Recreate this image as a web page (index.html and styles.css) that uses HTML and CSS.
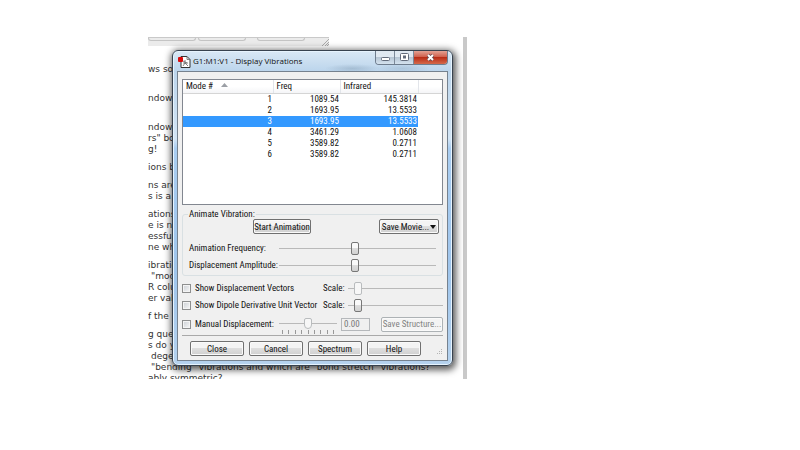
FILE: index.html
```html
<!DOCTYPE html>
<html lang="en">
<head>
<meta charset="utf-8">
<title>Display Vibrations</title>
<link rel="stylesheet" href="styles.css">
</head>
<body>
<main class="desktop">
  <div class="document">
    <div class="toolbar"><i></i><i></i><i class="apart"></i>
      <svg class="corner" width="8" height="8" viewBox="0 0 8 8"><path d="M1 8L8 1M4 8L8 4M6 8L8 6" stroke="#aaa" fill="none"/></svg>
    </div>
    <div class="notes">
      <p>ws so<br>&nbsp;</p>
      <p>ndow<br>&nbsp;</p>
      <p>ndow<br>rs" bo<br>g!</p>
      <p>ions b</p>
      <p>ns are<br>s is a</p>
      <p>ations<br>e is n<br>essful<br>ne wh</p>
      <p>ibratio<br><span class="indent">"mod</span><br>R colu<br>er val</p>
      <p>f the "</p>
      <p>g ques<br>s do yo<br><span class="indent">degen</span><br><span class="indent">"bending" vibrations and which are "bond stretch" vibrations?</span><br>ably symmetric?</p>
    </div>
  </div>

  <section class="window" aria-label="Display Vibrations">
    <header class="titlebar">
      <svg width="13" height="13" viewBox="0 0 13 13"><path d="M3 1.5h6l3 3v8H3z" fill="#fff" stroke="#333"/><path d="M9 1.5v3h3M7 5v3L5 11M7 8l3 3M5 6l4 2M5 8h5" fill="none" stroke="#666" stroke-width=".8"/><rect x="0" y="2" width="5" height="5" rx="1" fill="#d90b0b"/></svg>
      <h1>G1:M1:V1 - Display Vibrations</h1>
      <div class="caption">
        <button aria-label="Minimize"><svg width="11" height="9" viewBox="0 0 11 9"><rect x="1.5" y="4.5" width="8" height="3" rx="1" fill="#fff" stroke="#626b7b"/></svg></button>
        <button aria-label="Maximize"><svg width="11" height="9" viewBox="0 0 11 9"><rect x="1.5" y=".5" width="8" height="7" rx="1" fill="#fff" stroke="#626b7b"/><rect x="4.5" y="3" width="2" height="2" fill="#ccd" stroke="#626b7b"/></svg></button>
        <button class="x" aria-label="Close window"><svg width="11" height="9" viewBox="0 0 11 9"><path d="M3 2l5 5M8 2L3 7" stroke="#6b4a50" stroke-width="3.6"/><path d="M3 2l5 5M8 2L3 7" stroke="#fff" stroke-width="2"/></svg></button>
      </div>
    </header>

    <div class="client">
      <div class="list">
        <table>
          <colgroup><col class="c1"><col class="c2"><col class="c3"><col></colgroup>
          <thead><tr><th>Mode # <svg class="sort" width="7" height="4" viewBox="0 0 7 4"><path d="M0 4L3.5 0L7 4z" fill="#9b9fa5"/></svg></th><th>Freq</th><th>Infrared</th><th></th></tr></thead>
          <tbody>
            <tr><td>1</td><td>1089.54</td><td>145.3814</td></tr>
            <tr><td>2</td><td>1693.95</td><td>13.5533</td></tr>
            <tr class="selected"><td>3</td><td>1693.95</td><td>13.5533</td></tr>
            <tr><td>4</td><td>3461.29</td><td>1.0608</td></tr>
            <tr><td>5</td><td>3589.82</td><td>0.2711</td></tr>
            <tr><td>6</td><td>3589.82</td><td>0.2711</td></tr>
          </tbody>
        </table>
      </div>

      <fieldset>
        <legend>Animate Vibration:</legend>
        <div class="actions">
          <button class="btn">Start Animation</button>
          <button class="btn movie">Save Movie...<svg width="6" height="4" viewBox="0 0 6 4"><path d="M0 0h6L3 4z" fill="#111"/></svg></button>
        </div>
        <div class="slide"><label for="freq">Animation Frequency:</label><input id="freq" type="range" value="48"></div>
        <div class="slide"><label for="amp">Displacement Amplitude:</label><input id="amp" type="range" value="48"></div>
      </fieldset>

      <div class="option">
        <input type="checkbox" id="vec"><label for="vec">Show Displacement Vectors</label>
        <label class="scale" for="vs">Scale:</label><input id="vs" type="range" value="7" disabled>
      </div>
      <div class="option">
        <input type="checkbox" id="dip"><label for="dip">Show Dipole Derivative Unit Vector</label>
        <label class="scale" for="ds">Scale:</label><input id="ds" type="range" value="7">
      </div>
      <div class="option manual">
        <input type="checkbox" id="man"><label for="man">Manual Displacement:</label>
        <div class="ticked">
          <input type="range" value="50" disabled aria-label="Displacement">
          <div class="ticks"><i></i><i></i><i></i><i></i><i></i><i></i><i></i><i></i><i></i></div>
        </div>
        <input type="text" value="0.00" disabled aria-label="Displacement value">
        <button class="btn" disabled>Save Structure...</button>
      </div>

      <footer>
        <button class="btn">Close</button><button class="btn">Cancel</button><button class="btn">Spectrum</button><button class="btn">Help</button>
        <svg class="grip" width="7" height="7" viewBox="0 0 7 7"><path d="M5 0h1v1H5zM5 2h1v1H5zM3 2h1v1H3zM5 4h1v1H5zM3 4h1v1H3zM1 4h1v1H1z" fill="#b5b5b5"/></svg>
      </footer>
    </div>
  </section>
</main>
</body>
</html>
```
FILE: styles.css
```css
* { box-sizing: border-box; }
body { margin: 0; background: #fff; color: #111; font: 9px/11px "Roboto Condensed", "Open Sans Condensed", "Liberation Sans", sans-serif; }
button, input { font: inherit; color: inherit; margin: 0; }
svg { display: block; flex: none; }

.desktop { position: relative; width: 100%; max-width: 319px; margin: 37px 0 0 148px; }
.document { overflow: hidden; height: 342px; border-right: 4px solid #c9c9c9; }
.toolbar { display: flex; gap: 2px; width: 181px; height: 9px; background: #ebebeb; border-top: 1px solid #c9c9c9; }
.toolbar i { width: 48px; height: 3px; border: 1px solid #c4c4c4; border-top: 0; border-radius: 0 0 3px 3px; }
.toolbar .apart { margin-left: 9px; }
.corner { margin-left: auto; }
.notes { padding-top: 18px; font: 9px/11px "DejaVu Sans", sans-serif; color: #333; white-space: nowrap; }
.notes p { margin: 0 0 7px; }
.indent { margin-left: 3px; }

/* Dialog window, floating above the document */
.window {
  position: absolute; top: 13px; left: 24px; width: 281px; padding: 0 4px 4px;
  border: 1px solid #37424f; border-radius: 6px;
  background: linear-gradient(#d9e8f5, #bcd5ec 20px, #d3e5f5 28%, #a9cdf1 31%, #9fc5ec 70%, #b5d2ee);
  box-shadow: inset 0 0 0 1px #e6f3fd, 1px 2px 7px 2px rgba(0, 0, 0, .65);
}
.titlebar {
  display: flex; align-items: center; height: 20px; padding-left: 1px; gap: 2px;
  background: radial-gradient(closest-side, #7d96ad66, #7d96ad00) 148px 13px / 55px 9px no-repeat, radial-gradient(closest-side, #7d96ad44, #7d96ad00) 198px 13px / 55px 9px no-repeat;
}
.titlebar h1 { margin: 0; font: 8px/12px "Open Sans", sans-serif; white-space: nowrap; }
.caption { display: flex; align-self: flex-start; margin-left: auto; border: 1px solid #6f7d8e; border-top: 0; border-radius: 0 0 4px 4px; overflow: hidden; }
.caption button { display: grid; place-items: center; width: 19px; height: 13px; padding: 0; border: 0; border-right: 1px solid #7c8999; background: linear-gradient(#dfe8f1 45%, #b7c6d5 50%, #d4e2ee); }
.caption .x { width: 33px; border-right: 0; background: linear-gradient(#e3a193, #d0604d 45%, #b92d17 50%, #d5694b); }

.client { padding: 7px 4px 4px; border: 1px solid #76828f; background: #f0f0f0; }
.list { height: 126px; border: 1px solid #828790; background: #fff; }
table { width: 100%; table-layout: fixed; border-collapse: collapse; }
.c1 { width: 90px; }
.c2 { width: 67px; }
.c3 { width: 78px; }
th { height: 13px; padding: 0 3px; text-align: left; font-weight: normal; line-height: 12px; white-space: nowrap; background: linear-gradient(#fff 50%, #f4f5f7); border-right: 1px solid #e2e5ea; border-bottom: 1px solid #d5d5d5; }
th:last-child { border-right: 0; }
.sort { display: inline-block; margin: 0 0 2px 6px; }
td { height: 11px; padding: 0 1px; text-align: right; line-height: 11px; }
.selected td { background: #3399ff; color: #fff; }

fieldset { min-width: 0; margin: 5px 0 4px; padding: 0 3px 1px 5px; border: 1px solid #d9e0e3; border-radius: 3px; }
legend { padding: 0 1px; line-height: 9px; }
.actions { display: flex; justify-content: space-between; padding-left: 65px; margin-bottom: 6px; }
.btn { height: 15px; padding: 0; border: 1px solid #707070; border-radius: 2px; line-height: 12px; white-space: nowrap; background: linear-gradient(#f4f4f4 45%, #dedede 50%, #d0d0d0); box-shadow: inset 0 0 0 1px #fafafa; }
.btn:disabled { color: #838383; border-color: #adb2b5; background: #f4f4f4; }
.actions .btn { width: 58px; }
.actions .movie { display: flex; align-items: center; justify-content: center; gap: 1px; width: 60px; }
.slide { display: grid; grid-template-columns: 90px 1fr; align-items: center; height: 17px; padding: 0 3px 0 1px; white-space: nowrap; }

input[type="range"] { appearance: none; width: 100%; min-width: 0; height: 13px; background: linear-gradient(#b9b9b9, #b9b9b9) center / 100% 1px no-repeat; }
input[type="range"]::-webkit-slider-thumb { appearance: none; width: 8px; height: 13px; border: 1px solid #777; border-radius: 2px; background: linear-gradient(#fafafa 45%, #ddd 50%, #d2d2d2); }
input[type="range"]:disabled::-webkit-slider-thumb { border-color: #b9bcbe; background: #f7f7f7; }
input[type="checkbox"] { appearance: none; width: 9px; height: 9px; border: 1px solid #8e8f8f; background: linear-gradient(135deg, #ccd0d5, #f7f7f7); box-shadow: inset 0 0 0 1px #f4f4f4; }
.option { display: grid; grid-template-columns: 9px 124px 21px 1fr; column-gap: 4px; align-items: center; height: 17px; white-space: nowrap; }
.manual { grid-template-columns: 9px 80px 58px 29px 1fr; height: 19px; }
.ticked { padding-top: 3px; }
.ticked input { display: block; }
.ticked input::-webkit-slider-thumb { height: 11px; border-radius: 2px 2px 4px 4px; }
.ticks { display: flex; justify-content: space-between; padding: 0 3px; }
.ticks i { width: 1px; height: 4px; background: #999; }
input[type="text"] { width: 100%; height: 13px; padding: 0 2px; border: 1px solid #b5b8bb; background: #f0f0f0; color: #777; }
.manual .btn { justify-self: end; width: 62px; }

footer { display: flex; gap: 5px; margin-top: 2px; padding: 5px 0 0 8px; border-top: 1px solid #a9a9a9; }
footer .btn { width: 54px; }
.grip { align-self: flex-end; margin-left: auto; }
```
